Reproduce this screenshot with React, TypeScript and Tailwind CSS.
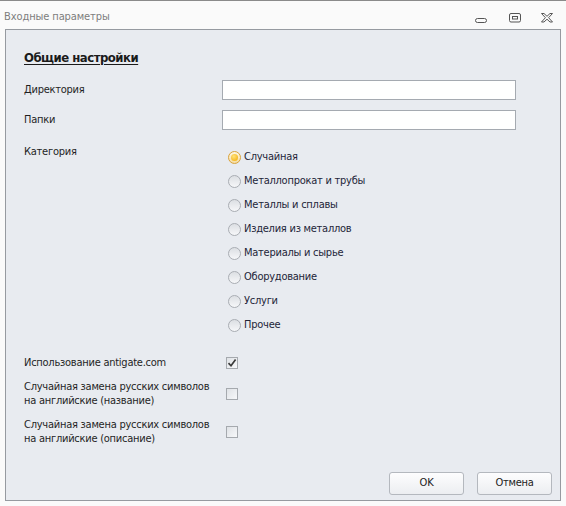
const categories = [
  "Случайная",
  "Металлопрокат и трубы",
  "Металлы и сплавы",
  "Изделия из металлов",
  "Материалы и сырье",
  "Оборудование",
  "Услуги",
  "Прочее",
];

function Radio({ checked }: { checked?: boolean }) {
  return (
    <span
      className={`w-[13px] h-[13px] rounded-full border flex items-center justify-center shrink-0 ${
        checked
          ? "border-[#d9a23a] bg-gradient-to-b from-[#fff7e0] to-[#f3dca5]"
          : "border-[#a9adb3] bg-gradient-to-b from-[#dcdfe3] to-[#f6f7f9]"
      }`}
    >
      {checked && <span className="w-[7px] h-[7px] rounded-full bg-[radial-gradient(circle_at_40%_35%,#ffe27a,#f2a900)]" />}
    </span>
  );
}

function Checkbox({ checked }: { checked?: boolean }) {
  return (
    <span className="w-[12px] h-[12px] border border-[#a5a9ae] bg-gradient-to-br from-[#dfe2e6] to-[#f7f8fa] flex items-center justify-center">
      {checked && (
        <svg width="10" height="10" viewBox="0 0 10 10">
          <path d="M1.5 5.2 L4 7.8 L8.6 1.6" fill="none" stroke="#3a3a3a" strokeWidth="1.7" />
        </svg>
      )}
    </span>
  );
}

function Button({ children }: { children: string }) {
  return (
    <button className="w-[75px] h-[23px] rounded-[3px] border border-[#b4b8be] bg-gradient-to-b from-[#fdfdfe] to-[#eceef1] text-[#222] text-[11px]">
      {children}
    </button>
  );
}

export default function App() {
  return (
    <div
      className="w-[566px] h-[506px] bg-[#fafafa] border-t border-[#8a8a8a] flex flex-col text-[11px] tracking-[-0.25px] text-[#1f1f1f]"
      style={{ fontFamily: '"DejaVu Sans Condensed", "DejaVu Sans", sans-serif' }}
    >
      {/* Title bar */}
      <div className="h-[28px] flex items-center pl-[4px] pr-[13px] pt-[5px]">
        <span className="text-[11px] text-[#7d7d7d] tracking-[-0.1px]">Входные параметры</span>
        <div className="ml-auto flex items-center gap-[20px]">
          <svg width="12" height="12" viewBox="0 0 12 12" className="mr-[2px]">
            <rect x="0.5" y="6.5" width="11" height="4" rx="2" fill="none" stroke="#555" />
          </svg>
          <svg width="12" height="10" viewBox="0 0 12 10">
            <rect x="0.5" y="0.5" width="11" height="8.5" rx="1.5" fill="none" stroke="#555" />
            <rect x="3.5" y="3.5" width="5" height="2.5" fill="none" stroke="#555" />
          </svg>
          <svg width="12" height="10" viewBox="0 0 12 10">
            <path
              d="M0.5 0.5 H3 L6 3.3 L9 0.5 H11.5 L7.6 4.7 L11.5 9 H9 L6 6.2 L3 9 H0.5 L4.4 4.7 Z"
              fill="none"
              stroke="#555"
              strokeLinejoin="round"
            />
          </svg>
        </div>
      </div>

      {/* Panel */}
      <div className="mx-[5px] h-[472px] border border-[#969aa0] bg-[#e8ebf0] flex flex-col pl-[18px] pt-[19px]">
        <h1 className="text-[13px] font-bold underline underline-offset-2 tracking-[-0.5px] text-[#1a1a1a] leading-[18px]">
          Общие настройки
        </h1>

        <div className="grid grid-cols-[198px_294px] mt-[13px] gap-y-[10px] items-center">
          <span>Директория</span>
          <input className="h-[20px] border border-[#a5aab1] bg-white" />
          <span>Папки</span>
          <input className="h-[20px] border border-[#a5aab1] bg-white" />
        </div>

        <div className="grid grid-cols-[198px_1fr] mt-[15px]">
          <span className="leading-[14px]">Категория</span>
          <div className="flex flex-col gap-[11px] pl-[6px] pt-[6px]">
            {categories.map((c, i) => (
              <label key={c} className="flex items-center gap-[3px] h-[13px] text-[#232538]">
                <Radio checked={i === 0} />
                {c}
              </label>
            ))}
          </div>
        </div>

        <div className="grid grid-cols-[202px_1fr] mt-[24px] gap-y-[10px] items-center leading-[14px]">
          <span>Использование antigate.com</span>
          <Checkbox checked />
          <span>
            Случайная замена русских символов
            <br />
            на английские (название)
          </span>
          <Checkbox />
          <span>
            Случайная замена русских символов
            <br />
            на английские (описание)
          </span>
          <Checkbox />
        </div>

        <div className="mt-auto mb-[5px] mr-[8px] flex justify-end gap-[13px]">
          <Button>OK</Button>
          <Button>Отмена</Button>
        </div>
      </div>
    </div>
  );
}
